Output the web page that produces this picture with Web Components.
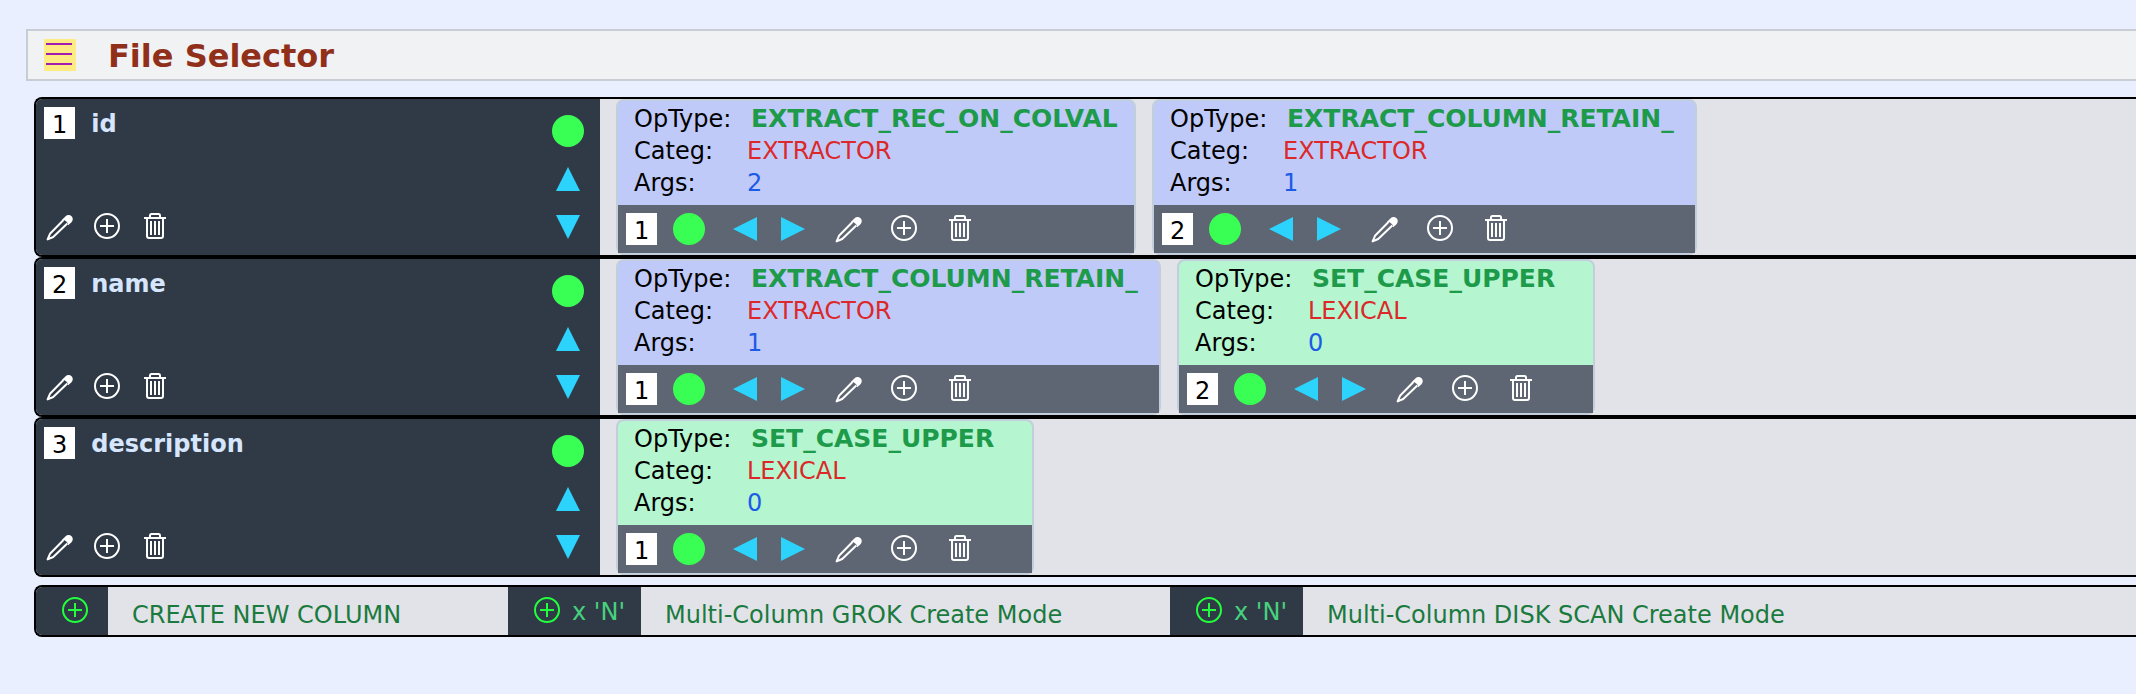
<!DOCTYPE html>
<html lang="en">
<head>
<meta charset="utf-8">
<meta name="viewport" content="width=device-width, initial-scale=1">
<title>File Selector</title>
<style>
  body {
    margin: 0;
    background-color: #e9effe;
    color: #000;
    font-family: Verdana, "DejaVu Sans", sans-serif;
    font-size: 24px;
    line-height: 32px;
    overflow-x: hidden;
  }
</style>
</head>
<body>
<column-board>
  <title-bar slot="title">File Selector</title-bar>

  <column-row number="1" name="id">
    <op-card number="1" categ="EXTRACTOR" args="2" style="--card-width: 520px">EXTRACT_REC_ON_COLVAL</op-card>
    <op-card number="2" categ="EXTRACTOR" args="1" style="--card-width: 545px">EXTRACT_COLUMN_RETAIN_</op-card>
  </column-row>
  <column-row number="2" name="name">
    <op-card number="1" categ="EXTRACTOR" args="1" style="--card-width: 545px">EXTRACT_COLUMN_RETAIN_</op-card>
    <op-card number="2" categ="LEXICAL" args="0" style="--card-width: 418px">SET_CASE_UPPER</op-card>
  </column-row>
  <column-row number="3" name="description">
    <op-card number="1" categ="LEXICAL" args="0" style="--card-width: 418px">SET_CASE_UPPER</op-card>
  </column-row>

  <create-bar slot="footer">
    <create-mode style="--mode-width: 472px">CREATE NEW COLUMN</create-mode>
    <create-mode many style="--mode-width: 662px">Multi-Column GROK Create Mode</create-mode>
    <create-mode many style="--mode-width: 662px">Multi-Column DISK SCAN Create Mode</create-mode>
  </create-bar>
</column-board>

<script>
(function(){

  const icons = {
    menu: `<rect width="32" height="32" fill="#ffeb84"/><path d="M2 5H28M2 15H28M2 25H28" stroke="#a21caf" stroke-width="2"/>`,
    dot: `<circle cx="16" cy="16" r="16" fill="#39ff54"/>`,
    up: `<path d="M16 4L28 28H4Z" fill="#2cd3fd"/>`,
    down: `<path d="M4 4H28L16 28Z" fill="#2cd3fd"/>`,
    left: `<path d="M28 4V28L4 16Z" fill="#2cd3fd"/>`,
    right: `<path d="M4 4L28 16L4 28Z" fill="#2cd3fd"/>`,
    pencil: `<path d="M19.5 9L6 22.800L3.600 28.400L9.200 26L23.300 12.500" fill="none" stroke="currentColor" stroke-width="2" stroke-linejoin="round"/><path d="M18 8.800L21.600 5.200A4.200 4.200 0 0 1 27.500 11.200L24.200 14.300Q23.500 9.500 18 8.800Z" fill="currentColor"/>`,
    plus: `<circle cx="15" cy="15" r="12" fill="none" stroke="currentColor" stroke-width="2"/><path d="M15 8V22M8 15H22" stroke="currentColor" stroke-width="2"/>`,
    trash: `<path d="M4 7H26M10 7V4.500Q10 3 11.500 3H18.500Q20 3 20 4.500V7M7 7V25Q7 27 9 27H21Q23 27 23 25V7M11 10V24M15 10V24M19 10V24" fill="none" stroke="currentColor" stroke-width="2"/>`
  };

  function define(name, html, setup) {
    const template = document.createElement("template");
    template.innerHTML = html;
    window.customElements.define(name, class extends HTMLElement {
      constructor() {
        super();
        this.attachShadow({ mode: "open" });
      }

      connectedCallback() {
        if (this.shadowRoot.childNodes.length) return;
        this.shadowRoot.appendChild(document.importNode(template.content, true));
        if (setup) setup(this, this.shadowRoot);
      }
    });
  }

  define("icon-button", `
  <style>
  :host{ display:block; width:32px; height:32px; color:#fff; }
  button{
    display:block;
    width:100%;
    height:100%;
    padding:0;
    border:0;
    background:none;
    color:inherit;
    cursor:pointer;
  }
  svg{ display:block; }
  </style>
  <button type="button"><svg width="32" height="32" viewBox="0 0 32 32" aria-hidden="true"></svg></button>
  `, (host, root) => {
    root.querySelector("svg").innerHTML = icons[host.getAttribute("icon")];
    root.querySelector("button").setAttribute("aria-label", host.getAttribute("label"));
  });

  define("number-badge", `
  <style>
  :host{
    display:block;
    box-sizing:border-box;
    height:32px;
    padding:2px 8px 0;
    background-color:#fff;
    color:#000;
  }
  </style>
  <slot></slot>
  `);

  define("title-bar", `
  <style>
  :host{
    display:flex;
    gap:32px;
    margin-left:26px;
    padding:8px 16px;
    border:2px solid #c8cdd4;
    border-right:0;
    background-color:#f1f2f4;
  }
  h1{
    margin:0;
    color:#91301a;
    font-size:32px;
    line-height:34px;
    height:32px;
    font-weight:bold;
  }
  </style>
  <icon-button icon="menu" label="Menu"></icon-button>
  <h1><slot></slot></h1>
  `);

  define("column-board", `
  <style>
  :host{ display:block; padding-top:29px; }
  main{ display:flex; flex-direction:column; margin:16px 0 8px 34px; }
  footer{ margin-left:34px; }
  </style>
  <header><slot name="title"></slot></header>
  <main><slot></slot></main>
  <footer><slot name="footer"></slot></footer>
  `);

  define("column-row", `
  <style>
  :host{
    display:flex;
    border:2px solid #000;
    border-right:0;
    border-radius:8px 0 0 8px;
    background-color:#e2e3e8;
    overflow:hidden;
  }
  .panel{
    box-sizing:border-box;
    display:flex;
    justify-content:space-between;
    flex:none;
    width:564px;
    padding:8px 16px 8px 8px;
    background-color:#303a47;
  }
  .info{ display:flex; flex-direction:column; justify-content:space-between; }
  .heading{ display:flex; gap:16px; }
  h2{
    margin:0;
    color:#d6e6fe;
    font-size:24px;
    line-height:34px;
  }
  .tools{ display:flex; gap:16px; padding-bottom:4px; }
  .order{
    display:flex;
    flex-direction:column;
    gap:16px;
    padding:8px 0 4px;
  }
  .cards{ display:flex; gap:16px; padding-left:16px; }
  </style>
  <section class="panel">
    <div class="info">
      <div class="heading"><number-badge></number-badge><h2></h2></div>
      <div class="tools">
        <icon-button icon="pencil" label="Edit column"></icon-button>
        <icon-button icon="plus" label="Add operation"></icon-button>
        <icon-button icon="trash" label="Delete column"></icon-button>
      </div>
    </div>
    <div class="order">
      <icon-button icon="dot" label="Toggle column"></icon-button>
      <icon-button icon="up" label="Move up"></icon-button>
      <icon-button icon="down" label="Move down"></icon-button>
    </div>
  </section>
  <div class="cards"><slot></slot></div>
  `, (host, root) => {
    root.querySelector("number-badge").textContent = host.getAttribute("number");
    root.querySelector("h2").textContent = host.getAttribute("name");
  });

  define("op-card", `
  <style>
  :host{
    box-sizing:border-box;
    flex:none;
    width:var(--card-width);
    border:2px solid #c2cedb;
    border-radius:8px;
    background-color:#bfcaf9;
  }
  :host([categ="LEXICAL"]){ background-color:#b5f5cf; }
  dl{
    display:grid;
    grid-template-columns:113px minmax(0, 1fr);
    margin:0;
    padding:2px 16px 6px;
  }
  dd{ margin:0; overflow:hidden; white-space:nowrap; }
  .optype{ padding-left:4px; color:#1d9a4a; font-size:25px; font-weight:bold; }
  .categ{ color:#dc2828; }
  .args{ color:#1c5be6; }
  .bar{
    display:flex;
    align-items:center;
    gap:16px;
    padding:8px;
    background-color:#5f6673;
  }
  .tools{ display:flex; gap:24px; padding-left:8px; }
  .order{ display:flex; gap:16px; padding-left:8px; }
  </style>
  <dl>
    <dt>OpType:</dt><dd class="optype"><slot></slot></dd>
    <dt>Categ:</dt><dd class="categ"></dd>
    <dt>Args:</dt><dd class="args"></dd>
  </dl>
  <div class="bar">
    <number-badge></number-badge>
    <icon-button icon="dot" label="Toggle operation"></icon-button>
    <div class="order">
      <icon-button icon="left" label="Move left"></icon-button>
      <icon-button icon="right" label="Move right"></icon-button>
    </div>
    <div class="tools">
      <icon-button icon="pencil" label="Edit operation"></icon-button>
      <icon-button icon="plus" label="Add operation"></icon-button>
      <icon-button icon="trash" label="Delete operation"></icon-button>
    </div>
  </div>
  `, (host, root) => {
    root.querySelector("number-badge").textContent = host.getAttribute("number");
    root.querySelector(".categ").textContent = host.getAttribute("categ");
    root.querySelector(".args").textContent = host.getAttribute("args");
  });

  define("create-bar", `
  <style>
  :host{
    display:flex;
    border:2px solid #000;
    border-right:0;
    border-radius:8px 0 0 8px;
    background-color:#e2e3e8;
    overflow:hidden;
  }
  </style>
  <slot></slot>
  `);

  define("create-mode", `
  <style>
  :host{ display:flex; flex:none; width:var(--mode-width); }
  button{
    display:flex;
    align-items:center;
    gap:8px;
    height:48px;
    padding:0 16px 0 24px;
    border:0;
    background-color:#303a47;
    color:#46d17d;
    font:inherit;
    cursor:pointer;
  }
  svg{ display:block; color:#22ff3c; }
  .times{ display:none; padding-top:2px; }
  :host([many]) .times{ display:inline; }
  .label{ padding:12px 24px 4px; color:#1b7a3e; }
  </style>
  <button type="button" aria-labelledby="label">
    <svg width="32" height="32" viewBox="0 0 32 32" aria-hidden="true">${icons.plus}</svg>
    <span class="times">x 'N'</span>
  </button>
  <span class="label" id="label"><slot></slot></span>
  `);

})();
</script>
</body>
</html>
